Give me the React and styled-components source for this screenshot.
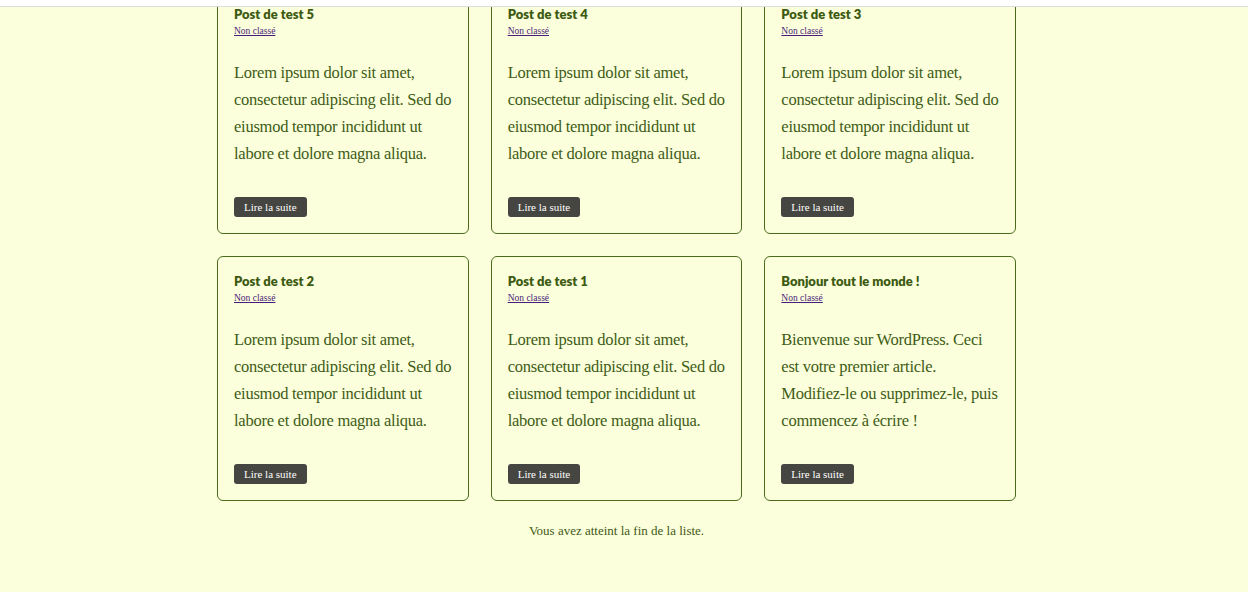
import React from "react";
import styled, { createGlobalStyle } from "styled-components";

const posts = [
  { title: "Post de test 5", text: "Lorem ipsum dolor sit amet, consectetur adipiscing elit. Sed do eiusmod tempor incididunt ut labore et dolore magna aliqua." },
  { title: "Post de test 4", text: "Lorem ipsum dolor sit amet, consectetur adipiscing elit. Sed do eiusmod tempor incididunt ut labore et dolore magna aliqua." },
  { title: "Post de test 3", text: "Lorem ipsum dolor sit amet, consectetur adipiscing elit. Sed do eiusmod tempor incididunt ut labore et dolore magna aliqua." },
  { title: "Post de test 2", text: "Lorem ipsum dolor sit amet, consectetur adipiscing elit. Sed do eiusmod tempor incididunt ut labore et dolore magna aliqua." },
  { title: "Post de test 1", text: "Lorem ipsum dolor sit amet, consectetur adipiscing elit. Sed do eiusmod tempor incididunt ut labore et dolore magna aliqua." },
  { title: "Bonjour tout le monde !", text: "Bienvenue sur WordPress. Ceci est votre premier article. Modifiez-le ou supprimez-le, puis commencez à écrire !" },
];

const App = () => {
  return (
    <>
      <GlobalStyle />
      <TopBar />
      <Main>
        <Grid>
          {posts.map((post, index) => (
            <Card key={index}>
              <Title>{post.title}</Title>
              <Category href="#">Non classé</Category>
              <Excerpt>{post.text}</Excerpt>
              <ReadMore>Lire la suite</ReadMore>
            </Card>
          ))}
        </Grid>
        <EndNote>Vous avez atteint la fin de la liste.</EndNote>
      </Main>
    </>
  );
};

const GlobalStyle = createGlobalStyle`
  html, body {
    margin: 0;
    padding: 0;
    background: #fcffdb;
    overflow: hidden;
  }
  body {
    font-family: "Liberation Serif", serif;
    color: #3f5a17;
  }
`;

const TopBar = styled.div`
  position: fixed;
  top: 0;
  left: 0;
  right: 0;
  height: 6px;
  background: #ffffff;
  border-bottom: 1px solid #dcdcdc;
  z-index: 10;
`;

const Main = styled.main`
  width: 799px;
  margin: -11px 0 0 217px;
  padding-bottom: 40px;
`;

const Grid = styled.div`
  display: grid;
  grid-template-columns: repeat(3, 1fr);
  column-gap: 22px;
  row-gap: 22px;
`;

const Card = styled.article`
  display: flex;
  flex-direction: column;
  align-items: flex-start;
  height: 245px;
  box-sizing: border-box;
  padding: 16px 16px 16px;
  border: 1px solid #4b6b1f;
  border-radius: 6px;
`;

const Title = styled.h2`
  margin: 0;
  font-family: "Lato", "Open Sans", sans-serif;
  font-weight: 800;
  font-size: 13px;
  line-height: 16px;
  color: #3d5a12;
`;

const Category = styled.a`
  margin-top: 3px;
  font-size: 9.5px;
  line-height: 12px;
  color: #4a1d7a;
  text-decoration: underline;
`;

const Excerpt = styled.p`
  margin: 22px 0 30px;
  font-size: 16.5px;
  line-height: 27px;
  letter-spacing: -0.25px;
  color: #405c17;
`;

const ReadMore = styled.button`
  margin-top: auto;
  height: 21px;
  padding: 0 10px;
  border: none;
  border-radius: 3px;
  background: #454541;
  color: #ffffff;
  font-family: "Liberation Serif", serif;
  font-size: 11px;
  cursor: pointer;
`;

const EndNote = styled.p`
  margin: 22px 0 0;
  text-align: center;
  font-size: 13px;
  color: #3f5a17;
`;

export default App;
